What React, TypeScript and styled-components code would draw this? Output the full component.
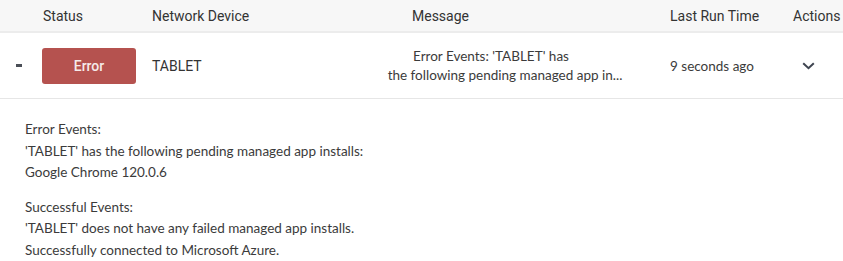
import React, { useState } from 'react';
import styled, { createGlobalStyle } from 'styled-components';

const GlobalStyle = createGlobalStyle`
  html, body {
    margin: 0;
    padding: 0;
    background: #ffffff;
  }
  body {
    font-family: Lato, 'Noto Sans', sans-serif;
    color: #3b3b3b;
  }
`;

const Table = styled.div`
  width: 843px;
`;

const columns = '42px 110px 228px 250px 40px 123px 50px';

const HeaderRow = styled.div`
  display: grid;
  grid-template-columns: ${columns};
  height: 31px;
  align-items: center;
  background: #f7f7f7;
  border-bottom: 2px solid #ececec;
  font-family: Roboto, 'Liberation Sans', sans-serif;
  font-size: 14px;
  color: #333333;
`;

const HeaderCell = styled.div<{ $offset?: number }>`
  padding-left: ${(p) => p.$offset ?? 0}px;
  white-space: nowrap;
`;

const BodyRow = styled.div`
  display: grid;
  grid-template-columns: ${columns};
  height: 65px;
  align-items: center;
  border-bottom: 1px solid #e6e6e6;
  font-size: 13.5px;
`;

const Toggle = styled.span`
  display: block;
  width: 6px;
  height: 3px;
  margin-left: 16px;
  background: #4a4f57;
`;

const StatusBadge = styled.div`
  width: 94px;
  height: 36px;
  display: flex;
  align-items: center;
  justify-content: center;
  background: #b5524f;
  border-radius: 3px;
  color: #f6eaea;
  font-family: Roboto, 'Liberation Sans', sans-serif;
  font-size: 14px;
  font-weight: 500;
`;

const DeviceName = styled.div`
  font-family: Roboto, 'Liberation Sans', sans-serif;
  font-size: 14px;
  color: #333333;
`;

const MessageText = styled.div`
  text-align: center;
  line-height: 19px;
  white-space: nowrap;
  color: #3b3b3b;
`;

const MessageLine = styled.span<{ $shift?: number }>`
  display: block;
  padding-right: ${(p) => p.$shift ?? 0}px;
`;

const TimeText = styled.div`
  color: #3b3b3b;
`;

const ActionButton = styled.button`
  border: none;
  background: transparent;
  padding: 0;
  margin-left: 9px;
  display: flex;
  cursor: pointer;
`;

const Details = styled.div`
  padding: 20px 25px 0;
  font-size: 13.5px;
  line-height: 21.5px;
  color: #3b3b3b;
`;

const Block = styled.div`
  & + & {
    margin-top: 13px;
  }
`;

const Chevron = () => (
  <svg width="13" height="8" viewBox="0 0 13 8">
    <path d="M1.2 1.2 L6.5 6.2 L11.8 1.2" fill="none" stroke="#3e4450" strokeWidth="2" />
  </svg>
);

const App: React.FC = () => {
  const [open, setOpen] = useState(true);

  return (
    <Table>
      <GlobalStyle />
      <HeaderRow>
        <HeaderCell />
        <HeaderCell $offset={1}>Status</HeaderCell>
        <HeaderCell>Network Device</HeaderCell>
        <HeaderCell $offset={32}>Message</HeaderCell>
        <HeaderCell />
        <HeaderCell>Last Run Time</HeaderCell>
        <HeaderCell>Actions</HeaderCell>
      </HeaderRow>
      <BodyRow>
        <Toggle />
        <StatusBadge>Error</StatusBadge>
        <DeviceName>TABLET</DeviceName>
        <MessageText>
          <MessageLine $shift={28}>Error Events: 'TABLET' has</MessageLine>
          <MessageLine>the following pending managed app in...</MessageLine>
        </MessageText>
        <div />
        <TimeText>9 seconds ago</TimeText>
        <ActionButton onClick={() => setOpen(!open)}>
          <Chevron />
        </ActionButton>
      </BodyRow>
      {open && (
        <Details>
          <Block>
            <div>Error Events:</div>
            <div>'TABLET' has the following pending managed app installs:</div>
            <div>Google Chrome 120.0.6</div>
          </Block>
          <Block>
            <div>Successful Events:</div>
            <div>'TABLET' does not have any failed managed app installs.</div>
            <div>Successfully connected to Microsoft Azure.</div>
          </Block>
        </Details>
      )}
    </Table>
  );
};

export default App;
